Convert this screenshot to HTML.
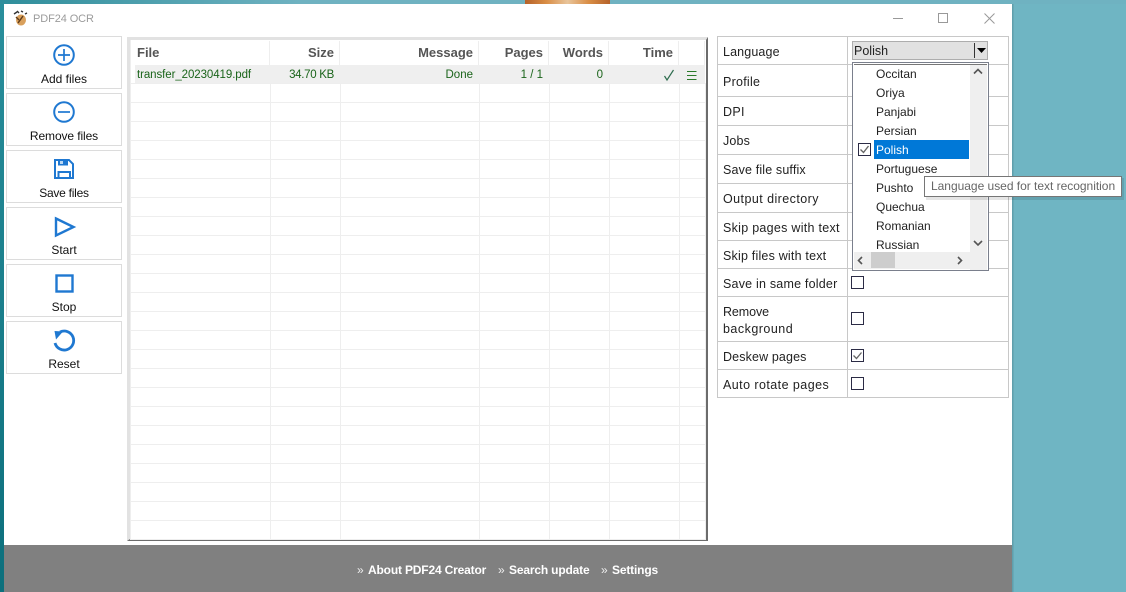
<!DOCTYPE html>
<html><head><meta charset="utf-8"><style>
html,body{margin:0;padding:0}
body{width:1126px;height:592px;overflow:hidden;position:relative;background:#6fb5c3;font-family:"Liberation Sans",sans-serif;font-size:12.5px;color:#111}
div,span{position:absolute;box-sizing:border-box;white-space:nowrap}
.btn{left:6px;width:116px;height:53px;border:1px solid #dcdcdc;background:#fff}
.bl{left:6px;width:116px;text-align:center;font-size:12px;color:#111;line-height:14px}
.h{font-weight:bold;font-size:13px;color:#555;line-height:16px;top:45px;text-align:right}
.c{color:#1a641a;font-size:11.5px;line-height:14px;top:68px;text-align:right}
.l{left:723px;line-height:15px;letter-spacing:.3px;color:#222}
.hl{background:#c8c8c8;left:717px;width:292px;height:1px}
.i{left:876px;line-height:15px;font-size:12px;color:#222}
.cb{left:851px;width:13px;height:13px;border:1px solid #2b2b45;background:#fff}
.f{top:563px;font-size:12px;font-weight:bold;line-height:14px;color:#fff;letter-spacing:-.17px}
.g{top:563px;font-size:12px;line-height:14px;color:#eee}
</style></head><body>
<div style="left:0;top:0;width:4px;height:592px;background:linear-gradient(#2a8f9c,#0c6f7c)"></div>
<div style="left:0;top:0;width:1126px;height:4px;background:#6fb2c1"></div>
<div style="left:0;top:0;width:300px;height:4px;background:linear-gradient(90deg,#2f8e9b,#6fb2c1)"></div>
<div style="left:525px;top:0;width:85px;height:4px;background:linear-gradient(90deg,#b5622a,#d98d45 25%,#e8c49a 50%,#d98d45 75%,#b5622a)"></div>
<div style="left:4px;top:4px;width:1008px;height:588px;background:#fff"></div>
<div style="left:1012px;top:4px;width:1px;height:588px;background:#5f9fac"></div>
<div style="left:1013px;top:4px;width:1px;height:588px;background:#68a9b6"></div>

<svg style="position:absolute;left:12px;top:9px" width="17" height="18" viewBox="0 0 17 18"><path d="M2 5l3-2M5 2l2 2M9 2l2 1M13 5l2-1" stroke="#333" stroke-width="1.4"/><ellipse cx="9" cy="11" rx="5" ry="5.5" fill="#d9a05c"/><path d="M4 8l3 3M6 14l5-7" stroke="#5b3a1a" stroke-width="1.4"/></svg>
<span style="left:33px;top:12px;font-size:11px;line-height:14px;color:#9b9b9b;letter-spacing:-.1px">PDF24 OCR</span>
<svg style="position:absolute;left:885px;top:8px" width="115" height="20"><path d="M8 10.5H18" stroke="#999"/><rect x="53.5" y="5.5" width="9" height="9" fill="none" stroke="#999"/><path d="M99.5 5.5l10 10M109.5 5.5l-10 10" stroke="#999"/></svg>

<div class="btn" style="top:36px"></div><div class="btn" style="top:93px"></div><div class="btn" style="top:150px"></div><div class="btn" style="top:207px"></div><div class="btn" style="top:264px"></div><div class="btn" style="top:321px"></div>
<div class="bl" style="top:72px">Add files</div>
<div class="bl" style="top:129px;letter-spacing:-.1px">Remove files</div>
<div class="bl" style="top:186px;letter-spacing:-.25px">Save files</div>
<div class="bl" style="top:243px">Start</div>
<div class="bl" style="top:300px">Stop</div>
<div class="bl" style="top:357px">Reset</div>
<svg style="position:absolute;left:0;top:0" width="130" height="380" fill="none" stroke="#1f78d1" stroke-width="2">
<circle cx="64" cy="55" r="9.8"/><path d="M58 55H70M64 49V61" stroke-width="1.7"/>
<circle cx="64" cy="112" r="9.8"/><path d="M58 112H70" stroke-width="1.7"/>
<path d="M55 160H69L73 164V178H55Z"/><path d="M58.5 178V172H70V178" stroke-width="2"/><rect x="58" y="160" width="10" height="5.5" fill="#1f78d1" stroke="none"/><rect x="60" y="161" width="3" height="3" fill="#bcd8f3" stroke="none"/>
<path d="M56 218.5L73.5 227L56 235.5Z" stroke-width="2.4"/>
<rect x="56.5" y="275.5" width="16" height="16" stroke-width="2.4"/>
<path d="M60 332A9.5 9.5 0 1 1 55 343" stroke-width="2.8"/><path d="M54.5 331L63 331.5L56 339.5Z" fill="#1f78d1" stroke="none"/>
</svg>

<!-- file table -->
<div style="left:127px;top:37px;width:581px;height:504px;background:#fff;border-left:3px solid #e2e2e2;border-top:3px solid #e2e2e2;border-right:2px solid #6c6c6c;border-bottom:2px solid #6c6c6c"></div>
<div style="left:135px;top:65px;width:570px;height:19px;background:#efefef"></div>
<div style="left:130px;top:83px;width:576px;height:457px;background:repeating-linear-gradient(#eee 0 1px,transparent 1px 19px)"></div>
<svg style="position:absolute;left:0;top:0" width="720" height="545" stroke="#eeeeee">
<path d="M130.5 40V539M270.5 84V539M340.5 84V539M479.5 84V539M549.5 84V539M609.5 84V539M679.5 84V539M705.5 84V539"/>
<path d="M269.5 41V65M339.5 41V65M478.5 41V65M548.5 41V65M608.5 41V65M678.5 41V65M704.5 41V65"/>
</svg>
<span class="h" style="left:137px;text-align:left">File</span>
<div class="h" style="left:270px;width:64px">Size</div>
<div class="h" style="left:340px;width:133px">Message</div>
<div class="h" style="left:480px;width:63px">Pages</div>
<div class="h" style="left:550px;width:53px">Words</div>
<div class="h" style="left:610px;width:63px">Time</div>
<span class="c" style="left:137px;letter-spacing:-.08px">transfer_20230419.pdf</span>
<div class="c" style="left:270px;width:64px;letter-spacing:-.3px">34.70 KB</div>
<div class="c" style="left:340px;width:133px">Done</div>
<div class="c" style="left:480px;width:63px">1 / 1</div>
<div class="c" style="left:550px;width:53px">0</div>
<svg style="position:absolute;left:660px;top:68px" width="40" height="14" fill="none" stroke="#2a7a2a"><path d="M4.5 8L7 12L13.5 2" stroke="#2f6d4f" stroke-width="1.2"/><path d="M27 3.5H36.5M27 7.5H36.5M27 11.5H36.5"/></svg>

<!-- settings table -->
<div style="left:717px;top:36px;width:292px;height:362px;border:1px solid #c8c8c8"></div>
<div style="left:847px;top:36px;width:1px;height:362px;background:#c8c8c8"></div>
<div class="hl" style="top:64px"></div><div class="hl" style="top:96px"></div><div class="hl" style="top:125px"></div><div class="hl" style="top:154px"></div><div class="hl" style="top:183px"></div><div class="hl" style="top:212px"></div><div class="hl" style="top:240px"></div><div class="hl" style="top:268px"></div><div class="hl" style="top:296px"></div><div class="hl" style="top:341px"></div><div class="hl" style="top:369px"></div>
<span class="l" style="top:45px;letter-spacing:.13px">Language</span>
<span class="l" style="top:75px;letter-spacing:.25px">Profile</span>
<span class="l" style="top:105px">DPI</span>
<span class="l" style="top:134px;letter-spacing:.15px">Jobs</span>
<span class="l" style="top:163px;letter-spacing:.15px">Save file suffix</span>
<span class="l" style="top:192px;letter-spacing:.44px">Output directory</span>
<span class="l" style="top:221px;letter-spacing:.28px">Skip pages with text</span>
<span class="l" style="top:249px;letter-spacing:.2px">Skip files with text</span>
<span class="l" style="top:277px;letter-spacing:.21px">Save in same folder</span>
<span class="l" style="top:305px;letter-spacing:-.1px">Remove</span>
<span class="l" style="top:322px;letter-spacing:.48px">background</span>
<span class="l" style="top:350px;letter-spacing:.13px">Deskew pages</span>
<span class="l" style="top:378px;letter-spacing:.44px">Auto rotate pages</span>
<div class="cb" style="top:276px"></div>
<div class="cb" style="top:312px"></div>
<div class="cb" style="top:349px"></div>
<div class="cb" style="top:377px"></div>
<svg style="position:absolute;left:851px;top:349px" width="13" height="13" fill="none"><path d="M2.5 6.5L5.5 9.5L10.5 3.5" stroke="#666" stroke-width="1.3"/></svg>

<!-- combo -->
<div style="left:852px;top:41px;width:136px;height:19px;background:#e1e1e1;border:1px solid #adadad"></div>
<span style="left:854px;top:44px;line-height:15px;font-size:12.5px;color:#222">Polish</span>
<svg style="position:absolute;left:970px;top:42px" width="18" height="17"><path d="M4.5 1V16" stroke="#333"/><path d="M7 6H16L11.5 11Z" fill="#000"/></svg>
<!-- list -->
<div style="left:852px;top:62px;width:137px;height:209px;background:#fff;border:1px solid #7a7f8c"></div>
<div style="left:854px;top:64px;width:133px;height:1px;background:#777"></div>
<div style="left:970px;top:65px;width:17px;height:205px;background:#efefef"></div>
<div style="left:854px;top:252px;width:133px;height:17px;background:#efefef"></div>
<div style="left:871px;top:252px;width:24px;height:16px;background:#cdcdcd"></div>
<div style="left:874px;top:140px;width:95px;height:19px;background:#0078d7"></div>
<span class="i" style="top:67px">Occitan</span>
<span class="i" style="top:86px">Oriya</span>
<span class="i" style="top:105px">Panjabi</span>
<span class="i" style="top:124px">Persian</span>
<span class="i" style="top:143px;color:#fff">Polish</span>
<span class="i" style="top:162px">Portuguese</span>
<span class="i" style="top:181px">Pushto</span>
<span class="i" style="top:200px">Quechua</span>
<span class="i" style="top:219px">Romanian</span>
<span class="i" style="top:238px">Russian</span>
<div class="cb" style="left:858px;top:143px;border-color:#2b2b45"></div>
<svg style="position:absolute;left:858px;top:143px" width="13" height="13" fill="none"><path d="M2.5 6.5L5.5 9.5L10.5 3" stroke="#666" stroke-width="1.4"/></svg>
<svg style="position:absolute;left:852px;top:62px" width="137" height="209" fill="none" stroke="#555" stroke-width="1.6"><path d="M122 11.5L126 7.5L130 11.5M122 179L126 183L130 179"/><path d="M10 195L6.5 198.5L10 202M106 195L109.5 198.5L106 202"/></svg>
<!-- tooltip -->
<div style="left:926px;top:178px;width:198px;height:22px;background:rgba(0,0,0,.1)"></div>
<div style="left:924px;top:176px;width:198px;height:21px;background:#fff;border:1px solid #767676"></div>
<span style="left:931px;top:179px;line-height:14px;font-size:12px;letter-spacing:-.02px;color:#666">Language used for text recognition</span>

<!-- footer -->
<div style="left:4px;top:545px;width:1008px;height:47px;background:#808080"></div>
<span class="g" style="left:357px">»</span>
<span class="f" style="left:368px">About PDF24 Creator</span>
<span class="g" style="left:498px">»</span>
<span class="f" style="left:509px">Search update</span>
<span class="g" style="left:601px">»</span>
<span class="f" style="left:612px">Settings</span>
</body></html>
